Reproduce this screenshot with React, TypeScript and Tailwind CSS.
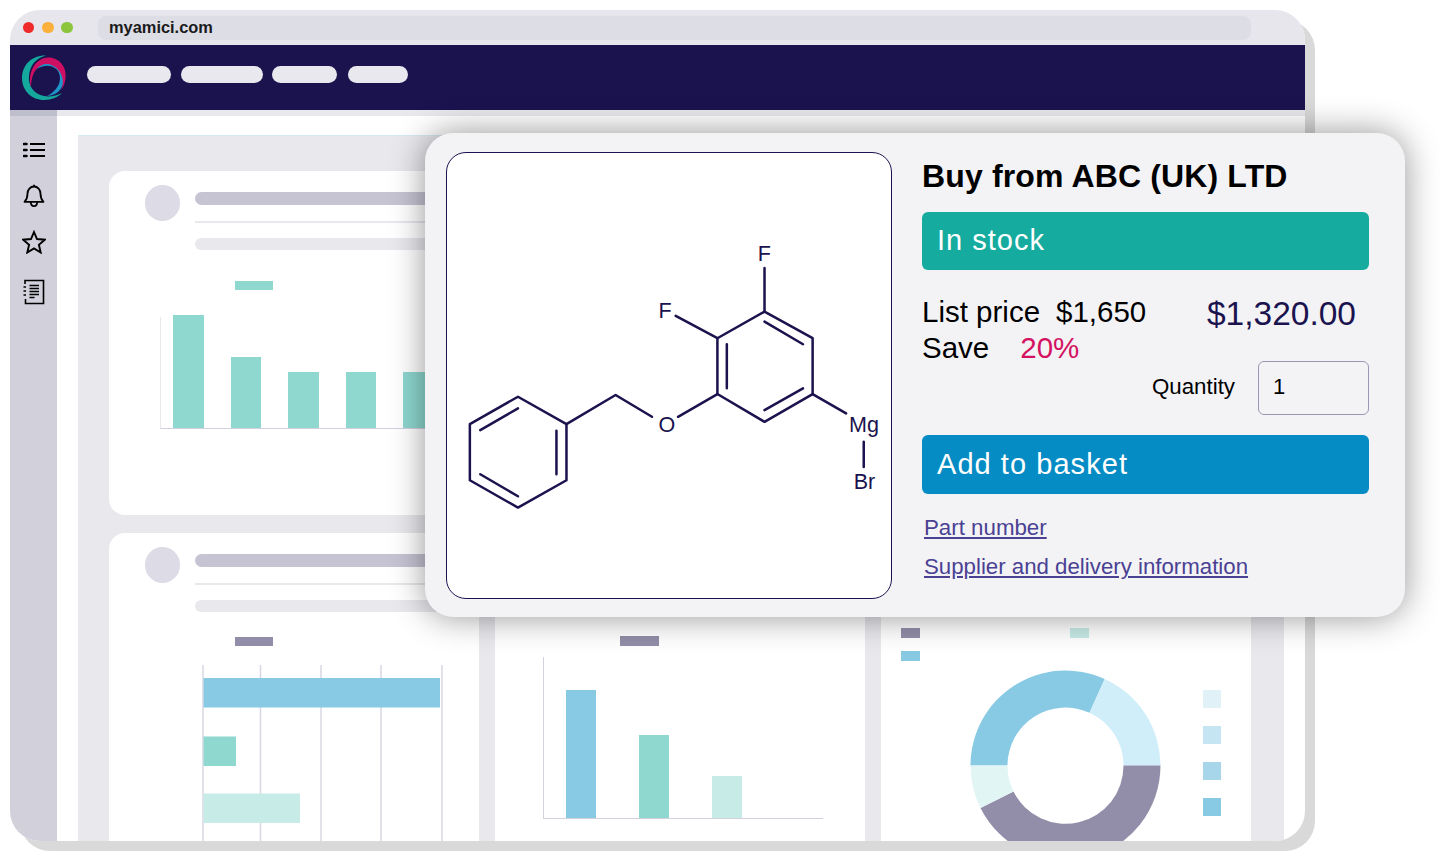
const tealBars = [113, 71, 56, 56, 56];
const columnBars = [
  { height: 128, color: "bg-[#88c9e3]" },
  { height: 83, color: "bg-[#8ed8d0]" },
  { height: 42, color: "bg-[#c7ebe7]" },
];
const donutKeys = ["bg-[#e1f1f8]", "bg-[#c5e5f2]", "bg-[#a7d5ea]", "bg-[#88c9e3]"];
const navPills = ["w-[84px]", "ml-[10px] w-[82px]", "ml-[9px] w-[65px]", "ml-[11px] w-[60px]"];

const Logo = () => (
  <svg className="ml-[12px] h-[46px] w-[46px] shrink-0" viewBox="22 55 46 46">
    <path
      fill="#14a99c"
      d="M46 55.500C32 55 22 65 22 78c0 13 10 22 22 22 8 0 14-3 18-7-6 3-12 4-18 3-10-2-16-10-15-20 1-11 7-18 17-20.500Z"
    />
    <path
      fill="#1f94c9"
      d="M35 70c5-7 15-9 22-4 8 6 9 18 2 25-3 3-7 4.500-12 5 6-3 13-9 13-18 0-8-7-13-15-12-4 .5-7 2-10 4Z"
    />
    <path
      fill="#cf0f62"
      d="M31 87c-4-15 5-29 17-29.500 12 0 19 10.500 17.500 20.500-.5 5-2 9-4 12 4-10-.5-22-11.500-25.500-9-2.500-19 5.500-19 22.500Z"
    />
  </svg>
);

const ListIcon = () => (
  <svg className="mt-[26px] h-[16px] w-[22px]" viewBox="0 0 22 16" fill="none" stroke="#000" strokeWidth="2">
    <path d="M7 2h15M7 8h15M7 14h15" />
    <path d="M1 2h2.500M1 8h2.500M1 14h2.500" strokeWidth="2.600" strokeLinecap="round" />
  </svg>
);

const BellIcon = () => (
  <svg className="mt-[26px] h-[23px] w-[22px]" viewBox="0 0 22 23" fill="none" stroke="#000" strokeWidth="1.800" strokeLinejoin="round">
    <path d="M1.500 17.800c2-2 3-3.800 3-8 0-4 2.800-7.300 6.500-7.300s6.500 3.300 6.500 7.300c0 4.200 1 6 3 8Z" />
    <path d="M11 .8v1.700M7.800 18c0 5.400 6.400 5.400 6.400 0" />
  </svg>
);

const StarIcon = () => (
  <svg className="mt-[23px] h-[24px] w-[24px]" viewBox="0 0 24 24" fill="none" stroke="#000" strokeWidth="1.900" strokeLinejoin="miter">
    <path d="m12 2 3 7 7.800.7-5.900 5.100 1.800 7.700L12 18.400l-6.700 4.100 1.800-7.700-5.900-5.100L9 9Z" />
  </svg>
);

const DocIcon = () => (
  <svg className="mt-[25px] h-[26px] w-[22px]" viewBox="0 0 22 26" fill="none" stroke="#000" strokeWidth="1.600">
    <path d="M2 5V1.500h18.500v23H2.500V20" />
    <path d="M6.500 6.500h9.500M6.500 9.500h9.500M6.500 12.500h9.500M6.500 15.500h9.500M6.500 18.500h5" />
    <path d="M.5 8h2.500M.5 12h2.500M.5 16h2.500" />
  </svg>
);

const CardHeader = () => (
  <div className="flex pl-[35.500px] pt-[14px]">
    <div className="h-[36px] w-[35.500px] shrink-0 rounded-full bg-[#dddce6]" />
    <div className="ml-[15px] flex-1 pr-[30px] pt-[7px]">
      <div className="h-[13px] rounded-full bg-[#c6c4d3]" />
      <div className="mt-[16px] h-[1.500px] bg-[#e8e8ed]" />
      <div className="mt-[15px] h-[12px] rounded-full bg-[#e8e8ed]" />
    </div>
  </div>
);

const TealCard = () => (
  <div className="overflow-hidden rounded-[16px] bg-white">
    <CardHeader />
    <div className="ml-[126px] mt-[31px] h-[9.500px] w-[38px] bg-[#8ed8d0]" />
    <div className="ml-[51px] mt-[27px] flex h-[112px] w-[310px] items-end gap-[27px] border-b-[1.500px] border-l-[1.500px] border-b-[#d3d1de] border-l-[#e8e8ed] pl-[12px]">
      {tealBars.map((height, i) => (
        <div key={i} className="w-[30.500px] shrink-0 bg-[#8ed8d0]" style={{ height }} />
      ))}
    </div>
  </div>
);

const HorizontalCard = () => (
  <div className="overflow-hidden rounded-[16px] bg-white">
    <CardHeader />
    <div className="ml-[126px] mt-[25px] h-[9.500px] w-[38px] bg-[#928ea9]" />
    <svg className="ml-[93px] mt-[18.500px] block h-[176px] w-[245px]" viewBox="0 0 245 176">
      {[1, 58.500, 119, 179, 240].map((x) => (
        <line key={x} x1={x} y1="0" x2={x} y2="176" stroke="#d8d6e2" strokeWidth="1.500" />
      ))}
      <rect x="1.500" y="13" width="236.500" height="29.500" fill="#88c9e3" />
      <rect x="1.500" y="71.500" width="32.500" height="29.500" fill="#8ed8d0" />
      <rect x="1.500" y="128.500" width="96.500" height="29.500" fill="#c7ebe7" />
    </svg>
  </div>
);

const ColumnCard = () => (
  <div className="overflow-hidden rounded-[16px] bg-white">
    <div className="ml-[125px] mt-[103px] h-[9.500px] w-[38.500px] bg-[#928ea9]" />
    <div className="ml-[48px] mt-[11px] flex h-[162px] w-[280px] items-end gap-[43px] border-b-[1.500px] border-l-[1.500px] border-[#d3d1de] pl-[22px]">
      {columnBars.map((bar) => (
        <div key={bar.color} className={`w-[30px] ${bar.color}`} style={{ height: bar.height }} />
      ))}
    </div>
  </div>
);

const DonutCard = () => (
  <div className="overflow-hidden rounded-[16px] bg-white pl-[20px] pt-[95px]">
    <div className="flex">
      <div className="h-[9.500px] w-[19px] bg-[#928ea9]" />
      <div className="ml-[150px] h-[9.500px] w-[19px] bg-[#c7ebe7]" />
    </div>
    <div className="mt-[13.500px] h-[9.500px] w-[19px] bg-[#88c9e3]" />
    <div className="flex">
      <svg className="ml-[68.500px] mt-[9.500px] h-[191px] w-[191px] shrink-0" viewBox="-95.500 -95.500 191 191">
        <path fill="#88c9e3" d="M-95 0A95 95 0 0 1 39.200-86.500L24-52.800A58 58 0 0 0-58 0Z" />
        <path fill="#d0eef9" d="M39.200-86.500A95 95 0 0 1 95 0H58A58 58 0 0 0 24-52.800Z" />
        <path fill="#928ea9" d="M95 0A95 95 0 0 1-85 42.500L-52 26A58 58 0 0 0 58 0Z" />
        <path fill="#e2f5f5" d="M-85 42.500A95 95 0 0 1-95 0H-58A58 58 0 0 0-52 26Z" />
      </svg>
      <div className="ml-[42.500px] mt-[29px] flex flex-col gap-[18px]">
        {donutKeys.map((color) => (
          <div key={color} className={`h-[18px] w-[18px] ${color}`} />
        ))}
      </div>
    </div>
  </div>
);

const Molecule = () => (
  <svg className="block h-full w-full" viewBox="447.500 153.500 443 444">
    <g fill="none" stroke="#1b134e" strokeWidth="2.500" strokeLinecap="round" strokeLinejoin="round">
      <path d="M764.300 311.700 812.300 338.300V394L764.300 421.700 717.300 394V338.300Z" />
      <path d="M764.300 321.700 802.700 344.300M764.300 410 802.700 388.300M726.700 344.300V388.300" />
      <path d="M764.300 311.700V268.300M717.300 338.300 675.700 316M812.300 394 845.700 413.300M863.300 441.700V466.700" />
      <path d="M717.300 394 678 416.700M652 416.700 615.700 395 566.700 424" />
      <path d="M566.700 424V480L518.300 507.300 470.300 480V424L518.300 396.700Z" />
      <path d="M556.700 430.700V474M518.300 408.300 480.700 430M480.700 474 518.300 496" />
    </g>
    <g fill="#1b134e" fontSize="21.500" textAnchor="middle" fontFamily="'Liberation Sans', sans-serif">
      <text x="764" y="261">F</text>
      <text x="665" y="318.500">F</text>
      <text x="667" y="432">O</text>
      <text x="863.500" y="432">Mg</text>
      <text x="864" y="489">Br</text>
    </g>
  </svg>
);

const BuyPanel = () => (
  <div className="absolute left-[425px] top-[133px] flex h-[484px] w-[980px] rounded-[28px] bg-[#f3f3f6] pl-[21px] pt-[19px] shadow-[0_0_34px_rgba(0,0,0,0.42)]">
    <div className="h-[447px] w-[446px] shrink-0 overflow-hidden rounded-[20px] border-[1.500px] border-[#1b134e] bg-white">
      <Molecule />
    </div>
    <div className="ml-[30px] w-[447px]">
      <h2 className="mt-[6px] text-[32px] font-bold leading-[36px] tracking-[0.14px] text-black">Buy from ABC (UK) LTD</h2>
      <div className="mt-[18px] flex h-[58px] items-center rounded-[6px] bg-[#15ac9f] pl-[15px] text-[29px] tracking-[1px] text-white">
        In stock
      </div>
      <div className="mt-[24px] flex h-[36px] justify-between pr-[13px] text-[29.500px] leading-[36px]">
        <div className="text-black">
          List price<span className="ml-[16px]">$1,650</span>
        </div>
        <div className="text-[33.500px] leading-[40px] text-[#1b134e]">$1,320.00</div>
      </div>
      <div className="text-[29.500px] leading-[36px] text-black">
        Save<span className="ml-[31px] text-[#d4125f]">20%</span>
      </div>
      <div className="-mt-[5px] flex items-center justify-end gap-[23px]">
        <span className="pb-[2px] text-[22.300px] text-black">Quantity</span>
        <div className="flex h-[54px] w-[111px] items-center rounded-[6px] border border-[#9a96b5] pb-[3px] pl-[14px] text-[22px] text-black">
          1
        </div>
      </div>
      <button className="mt-[20px] flex h-[59px] w-full items-center rounded-[6px] bg-[#068cc4] pl-[15px] text-[29px] tracking-[1.050px] text-white">
        Add to basket
      </button>
      <a className="ml-[2px] mt-[19px] block text-[22.300px] leading-[30px] text-[#4a4193] underline">Part number</a>
      <a className="ml-[2px] mt-[9px] block text-[22.250px] leading-[30px] text-[#4a4193] underline">
        Supplier and delivery information
      </a>
    </div>
  </div>
);

export default function App() {
  return (
    <div className="relative h-[866px] w-[1440px] overflow-hidden bg-white pl-[10px] pt-[10px] font-['Liberation_Sans',Arial,sans-serif]">
      <div className="flex h-[831px] w-[1295px] flex-col overflow-hidden rounded-[30px] bg-white shadow-[10px_10px_0_#d9d9d9]">
        <div className="flex h-[35px] shrink-0 items-center bg-[#e6e6ec] pl-[12.500px] pr-[54px]">
          <span className="h-[11.500px] w-[11.500px] rounded-full bg-[#ee2a2a]" />
          <span className="ml-[8px] h-[11.500px] w-[11.500px] rounded-full bg-[#fbb03b]" />
          <span className="ml-[7.500px] h-[11.500px] w-[11.500px] rounded-full bg-[#8cc63f]" />
          <div className="ml-[25px] flex h-[24px] flex-1 items-center rounded-[8px] bg-[#dddde6] pl-[11.500px] text-[16.400px] font-bold text-[#1a1a1a]">
            myamici.com
          </div>
        </div>
        <div className="flex h-[65px] shrink-0 items-center bg-[#1b134e]">
          <Logo />
          <div className="ml-[19px] flex pb-[6px]">
            {navPills.map((pill) => (
              <div key={pill} className={`h-[17px] rounded-full bg-[#e8e8ee] ${pill}`} />
            ))}
          </div>
        </div>
        <div className="flex min-h-0 flex-1">
          <aside className="flex w-[47px] shrink-0 flex-col items-center bg-[#d1d0db]">
            <div className="h-[6px] w-full bg-[#bfbecd]" />
            <ListIcon />
            <BellIcon />
            <StarIcon />
            <DocIcon />
          </aside>
          <div className="flex min-w-0 flex-1 flex-col">
            <div className="h-[6px] shrink-0 bg-[#e8e8ed]" />
            <main className="ml-[21px] mr-[21px] mt-[19px] grid min-h-0 flex-1 grid-cols-[370px_370px_370px] grid-rows-[344px_340px] gap-x-[16px] gap-y-[18px] overflow-hidden border-t-[1.500px] border-[#d5e9f2] bg-[#e8e8ed] pl-[31px] pt-[35px]">
              <TealCard />
              <div className="rounded-[16px] bg-white" />
              <div className="rounded-[16px] bg-white" />
              <HorizontalCard />
              <ColumnCard />
              <DonutCard />
            </main>
          </div>
        </div>
      </div>
      <BuyPanel />
    </div>
  );
}
